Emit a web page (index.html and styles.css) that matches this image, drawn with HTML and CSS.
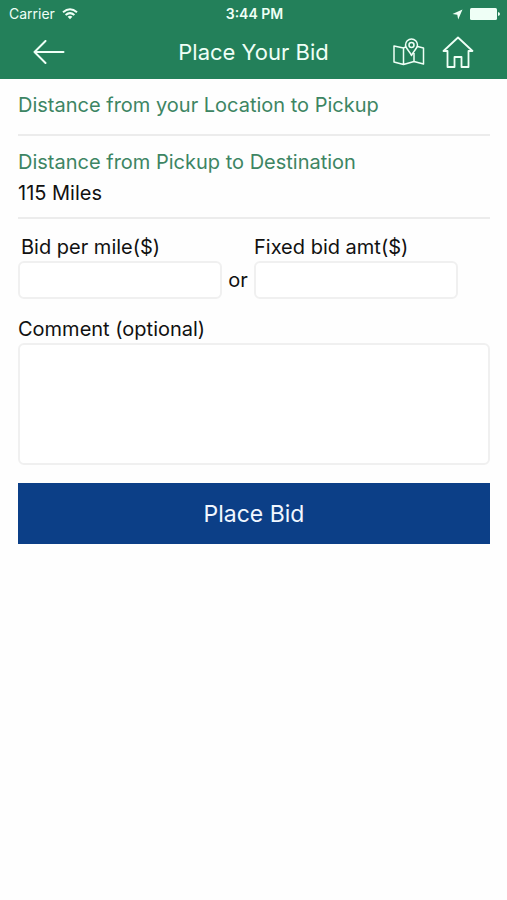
FILE: index.html
```html
<!DOCTYPE html>
<html lang="en">
<head>
<meta charset="utf-8">
<meta name="viewport" content="width=device-width, initial-scale=1">
<title>Place Your Bid</title>
<link rel="stylesheet" href="styles.css">
</head>
<body>
<header class="header">
  <div class="status">
    <div class="status-left">
      <span>Carrier</span>
      <svg width="16" height="12" viewBox="0 0 16 12" fill="none" stroke="currentColor" stroke-width="2" aria-hidden="true">
        <path d="M1 4.300Q8 -1.700 15 4.300M3.600 7Q8 3.200 12.400 7"/>
        <path d="M5.600 8.700Q8 6.700 10.400 8.700L8 11.300Z" fill="currentColor" stroke="none"/>
      </svg>
    </div>
    <span class="time">3:44 PM</span>
    <div class="status-right">
      <svg width="11" height="11" viewBox="0 0 11 11" fill="currentColor" aria-hidden="true"><path d="M10.500 .500L6.200 10.500L5.300 5.700L.500 5Z"/></svg>
      <svg width="30" height="12" viewBox="0 0 30 12" fill="currentColor" aria-hidden="true"><rect width="27" height="12" rx="1.500"/><path d="M28 4Q30 4.500 30 6T28 8Z"/></svg>
    </div>
  </div>
  <nav class="nav">
    <div class="nav-side">
      <button class="icon-button" type="button" aria-label="Back">
        <svg width="32" height="24" viewBox="0 0 32 24" fill="none" stroke="currentColor" stroke-width="2" stroke-linecap="round" stroke-linejoin="round"><path d="M30.500 12H1.500M12.500 1L1.500 12L12.500 23"/></svg>
      </button>
    </div>
    <h1 class="title">Place Your Bid</h1>
    <div class="nav-side nav-actions">
      <button class="icon-button" type="button" aria-label="Map">
        <svg width="32" height="28" viewBox="0 0 32 28" fill="none" stroke="currentColor" stroke-width="1.500" stroke-linejoin="round"><path d="M12.500 9L10.500 10L1 8V24L10.500 26.500L21 23.500L30.500 26V10L24.500 8.500M10.500 10V26.500M21 15V23.500M18.500 17.500C17 13.500 12.500 10.500 12.500 7A6 6 0 0 1 24.500 7C24.500 10.500 20 13.500 18.500 17.500Z"/><circle cx="18.500" cy="7" r="2.500"/></svg>
      </button>
      <button class="icon-button" type="button" aria-label="Home">
        <svg width="32" height="32" viewBox="0 0 32 32" fill="none" stroke="currentColor" stroke-width="1.800" stroke-linejoin="round"><path d="M16 1.500L30.500 15H26.500V31H19.500V21H12.500V31H5.500V15H1.500Z"/></svg>
      </button>
    </div>
  </nav>
</header>
<main class="content">
  <section class="distance">
    <h2 class="distance-title">Distance from your Location to Pickup</h2>
  </section>
  <section class="distance">
    <h2 class="distance-title">Distance from Pickup to Destination</h2>
    <p class="distance-value">115 Miles</p>
  </section>
  <form class="form">
    <div class="bids">
      <div class="field">
        <label class="label inset" for="per-mile">Bid per mile($)</label>
        <input class="box" id="per-mile" type="text" inputmode="decimal">
      </div>
      <span class="or">or</span>
      <div class="field">
        <label class="label" for="fixed">Fixed bid amt($)</label>
        <input class="box" id="fixed" type="text" inputmode="decimal">
      </div>
    </div>
    <div class="field">
      <label class="label" for="comment">Comment (optional)</label>
      <textarea class="box comment" id="comment"></textarea>
    </div>
    <button class="submit" type="button">Place Bid</button>
  </form>
</main>
</body>
</html>
```
FILE: styles.css
```css
* {
  box-sizing: border-box;
}

body {
  margin: 0;
  background: #fefefe;
  color: #111;
  font-family: Inter, "Liberation Sans", sans-serif;
  font-size: 20px;
  line-height: 24px;
}

h1, h2, p {
  margin: 0;
  font-weight: 400;
}

button, input, textarea {
  font: inherit;
  color: inherit;
}

svg {
  display: block;
}

.header {
  background: #23805a;
  color: #effff6;
}

.status {
  display: grid;
  grid-template-columns: 1fr auto 1fr;
  align-items: center;
  height: 28px;
  padding: 0 7px 0 9px;
  font-size: 14px;
  line-height: 16px;
}

.status-left, .status-right {
  display: flex;
  align-items: center;
  gap: 7px;
}

.status-right {
  justify-content: flex-end;
}

.time {
  font-weight: 600;
}

.nav {
  display: grid;
  grid-template-columns: 1fr auto 1fr;
  align-items: center;
  height: 51px;
  padding: 0 33px 4px;
}

.nav-side {
  display: flex;
  align-items: center;
}

.nav-actions {
  justify-content: flex-end;
  gap: 17px;
}

.icon-button {
  padding: 0;
  border: 0;
  background: none;
}

.title {
  font-size: 22px;
  line-height: 28px;
}

.content {
  padding: 0 17px 0 18px;
}

.distance {
  padding: 14px 0 11px;
  border-bottom: 2px solid #ececec;
}

.distance-title {
  padding-bottom: 6px;
  color: #3d8563;
  font-size: 20px;
  line-height: 24px;
}

.distance-value {
  line-height: 26px;
}

.form {
  display: flex;
  flex-direction: column;
  gap: 18px;
  padding-top: 16px;
}

.bids {
  display: grid;
  grid-template-columns: 1fr 32px 1fr;
  align-items: end;
  padding-right: 32px;
}

.field {
  display: flex;
  flex-direction: column;
  min-width: 0;
}

.label {
  padding-bottom: 2px;
  line-height: 24px;
}

.inset {
  padding-left: 3px;
}

.box {
  width: 100%;
  height: 38px;
  padding: 4px 8px;
  border: 2px solid #f0f0f0;
  border-radius: 6px;
  background: #fff;
}

.or {
  line-height: 38px;
  text-align: center;
}

.comment {
  display: block;
  height: 122px;
  resize: none;
}

.submit {
  height: 61px;
  padding: 0;
  border: 0;
  background: #0c3f87;
  color: #f1f7ff;
  font-size: 23px;
}
```
